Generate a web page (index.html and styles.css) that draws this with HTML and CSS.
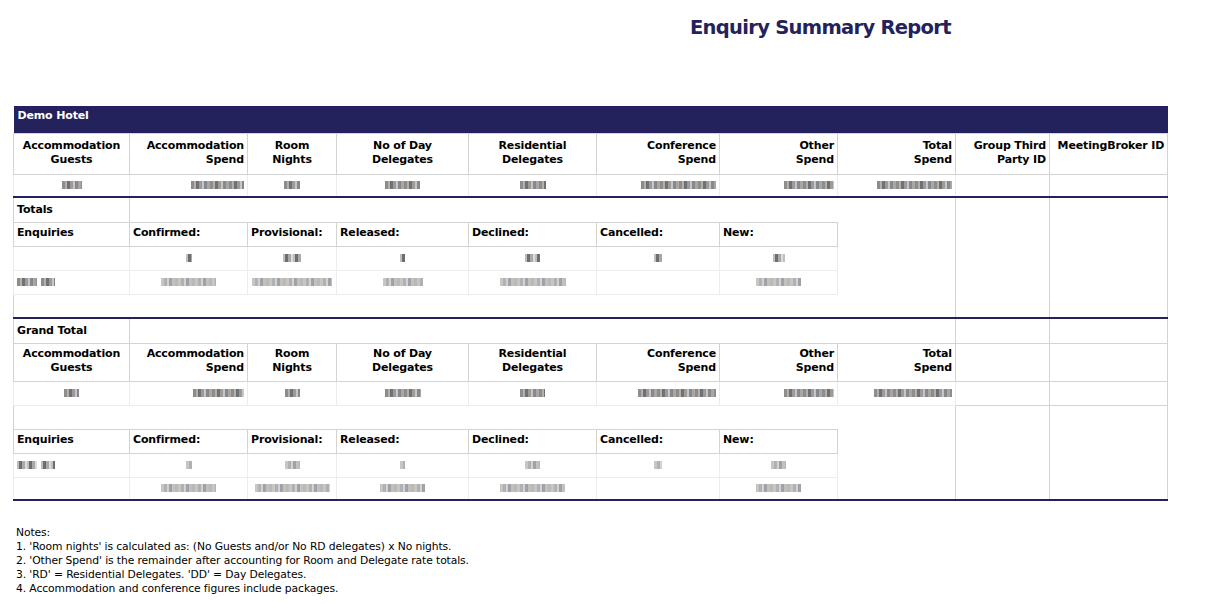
FILE: index.html
```html
<!DOCTYPE html>
<html lang="en">
<head>
<meta charset="utf-8">
<title>Enquiry Summary Report</title>
<link rel="stylesheet" href="styles.css">
</head>
<body>
<div class="page">
  <h1 class="title">Enquiry Summary Report</h1>
  <table class="report">
    <colgroup>
      <col class="c1"><col class="c2"><col class="c3"><col class="c4"><col class="c5">
      <col class="c6"><col class="c7"><col class="c8"><col class="c9"><col class="c10">
    </colgroup>
    <tbody>
      <tr class="band"><td colspan="10">Demo Hotel</td></tr>
      <tr class="hdr hdr-a">
        <th class="ctr">Accommodation<br>Guests</th>
        <th class="rgt">Accommodation<br>Spend</th>
        <th class="ctr">Room<br>Nights</th>
        <th class="ctr">No of Day<br>Delegates</th>
        <th class="ctr">Residential<br>Delegates</th>
        <th class="rgt">Conference<br>Spend</th>
        <th class="rgt">Other<br>Spend</th>
        <th class="rgt">Total<br>Spend</th>
        <th class="rgt">Group Third<br>Party ID</th>
        <th class="rgt">MeetingBroker ID</th>
      </tr>
      <tr class="data">
        <td class="ctr soft"><span class="v w20"></span></td>
        <td class="rgt soft"><span class="v w53"></span></td>
        <td class="ctr soft"><span class="v w16"></span></td>
        <td class="ctr soft"><span class="v w35"></span></td>
        <td class="ctr soft"><span class="v w26"></span></td>
        <td class="rgt soft"><span class="v w75"></span></td>
        <td class="rgt soft"><span class="v w50"></span></td>
        <td class="rgt soft"><span class="v w75"></span></td>
        <td class="box"></td>
        <td class="box"></td>
      </tr>
      <tr class="sect lbl">
        <td class="box"><b>Totals</b></td>
        <td colspan="7"></td>
        <td class="side" rowspan="5"></td>
        <td class="side" rowspan="5"></td>
      </tr>
      <tr class="lbl">
        <td class="box"><b>Enquiries</b></td>
        <td class="box"><b>Confirmed:</b></td>
        <td class="box"><b>Provisional:</b></td>
        <td class="box"><b>Released:</b></td>
        <td class="box"><b>Declined:</b></td>
        <td class="box"><b>Cancelled:</b></td>
        <td class="box"><b>New:</b></td>
        <td></td>
      </tr>
      <tr class="val">
        <td class="box soft"></td>
        <td class="box soft ctr"><span class="v dk w6"></span></td>
        <td class="box soft ctr"><span class="v dk w18"></span></td>
        <td class="box soft ctr"><span class="v dk w5"></span></td>
        <td class="box soft ctr"><span class="v dk w15"></span></td>
        <td class="box soft ctr"><span class="v dk w8"></span></td>
        <td class="box soft ctr"><span class="v dk w12"></span></td>
        <td></td>
      </tr>
      <tr class="val">
        <td class="box soft lft"><span class="v w20"></span> <span class="v w14"></span></td>
        <td class="box soft ctr"><span class="v lt w55"></span></td>
        <td class="box soft ctr"><span class="v lt w80"></span></td>
        <td class="box soft ctr"><span class="v lt w40"></span></td>
        <td class="box soft ctr"><span class="v lt w66"></span></td>
        <td class="box soft ctr"></td>
        <td class="box soft ctr"><span class="v lt w45"></span></td>
        <td></td>
      </tr>
      <tr class="gap">
        <td class="lside" colspan="8"></td>
      </tr>
      <tr class="sect lbl">
        <td class="box"><b>Grand Total</b></td>
        <td colspan="7"></td>
        <td class="box"></td>
        <td class="box"></td>
      </tr>
      <tr class="hdr hdr-b">
        <th class="ctr">Accommodation<br>Guests</th>
        <th class="rgt">Accommodation<br>Spend</th>
        <th class="ctr">Room<br>Nights</th>
        <th class="ctr">No of Day<br>Delegates</th>
        <th class="ctr">Residential<br>Delegates</th>
        <th class="rgt">Conference<br>Spend</th>
        <th class="rgt">Other<br>Spend</th>
        <th class="rgt">Total<br>Spend</th>
        <th></th>
        <th></th>
      </tr>
      <tr class="val">
        <td class="ctr soft"><span class="v w15"></span></td>
        <td class="rgt soft"><span class="v w51"></span></td>
        <td class="ctr soft"><span class="v w15"></span></td>
        <td class="ctr soft"><span class="v w36"></span></td>
        <td class="ctr soft"><span class="v w25"></span></td>
        <td class="rgt soft"><span class="v w78"></span></td>
        <td class="rgt soft"><span class="v w50"></span></td>
        <td class="rgt soft"><span class="v w78"></span></td>
        <td class="box"></td>
        <td class="box"></td>
      </tr>
      <tr class="gap">
        <td class="lside" colspan="8"></td>
        <td class="side" rowspan="4"></td>
        <td class="side" rowspan="4"></td>
      </tr>
      <tr class="lbl">
        <td class="box"><b>Enquiries</b></td>
        <td class="box"><b>Confirmed:</b></td>
        <td class="box"><b>Provisional:</b></td>
        <td class="box"><b>Released:</b></td>
        <td class="box"><b>Declined:</b></td>
        <td class="box"><b>Cancelled:</b></td>
        <td class="box"><b>New:</b></td>
        <td></td>
      </tr>
      <tr class="val">
        <td class="box soft lft"><span class="v dk w20"></span> <span class="v dk w14"></span></td>
        <td class="box soft ctr"><span class="v lt w6"></span></td>
        <td class="box soft ctr"><span class="v lt w15"></span></td>
        <td class="box soft ctr"><span class="v lt w5"></span></td>
        <td class="box soft ctr"><span class="v lt w15"></span></td>
        <td class="box soft ctr"><span class="v lt w8"></span></td>
        <td class="box soft ctr"><span class="v lt w15"></span></td>
        <td></td>
      </tr>
      <tr class="val last">
        <td class="box soft"></td>
        <td class="box soft ctr"><span class="v lt w55"></span></td>
        <td class="box soft ctr"><span class="v lt w75"></span></td>
        <td class="box soft ctr"><span class="v lt w45"></span></td>
        <td class="box soft ctr"><span class="v lt w65"></span></td>
        <td class="box soft ctr"></td>
        <td class="box soft ctr"><span class="v lt w45"></span></td>
        <td></td>
      </tr>
    </tbody>
  </table>
  <div class="notes">
    <div>Notes:</div>
    <div>1. 'Room nights' is calculated as: (No Guests and/or No RD delegates) x No nights.</div>
    <div>2. 'Other Spend' is the remainder after accounting for Room and Delegate rate totals.</div>
    <div>3. 'RD' = Residential Delegates. 'DD' = Day Delegates.</div>
    <div>4. Accommodation and conference figures include packages.</div>
  </div>
</div>
</body>
</html>
```

FILE: styles.css
```css
* { box-sizing: border-box; }

body {
  margin: 0;
  background: #ffffff;
  color: #000000;
  font-family: "DejaVu Sans", Verdana, sans-serif;
}

.page {
  padding-left: 13px;
}

.title {
  margin: 0 0 65px 0;
  padding: 15px 0 0 677px;
  font-size: 19.5px;
  line-height: 26px;
  font-weight: bold;
  color: #23225c;
  letter-spacing: -0.7px;
}

.report {
  border-collapse: collapse;
  table-layout: fixed;
  width: 1154px;
  font-size: 11px;
  line-height: 14px;
  border-bottom: 2px solid #23225c;
}

.c1 { width: 116px; }
.c2 { width: 118px; }
.c3 { width: 89px; }
.c4 { width: 132px; }
.c5 { width: 128px; }
.c6 { width: 123px; }
.c7 { width: 118px; }
.c8 { width: 118px; }
.c9 { width: 94px; }
.c10 { width: 118px; }

.report td,
.report th {
  padding: 0 3px;
  vertical-align: middle;
  text-align: left;
  font-weight: normal;
}

.report b,
.report th {
  font-weight: bold;
  letter-spacing: -0.15px;
}

.band td {
  height: 27px;
  background: #23225c;
  color: #ffffff;
  font-weight: bold;
  vertical-align: top;
  padding: 3px 4px 0;
  letter-spacing: -0.15px;
}

.hdr th {
  border: 1px solid #d3d3d3;
  vertical-align: top;
  padding-top: 5px;
}

.hdr-a th { height: 41px; }
.hdr-b th { height: 38px; padding-top: 3px; }

.data td { height: 23px; }
.val td { height: 24px; }
.last td { height: 23px; }
.gap td { height: 24px; }
.lbl td { height: 24px; vertical-align: top; padding-top: 3px; }
.report tr.sect > td { height: 25px; padding-top: 5px; border-top: 2px solid #23225c; }

.box { border: 1px solid #d3d3d3; }
.soft { border: 1px solid #ededed; }
.val .box.soft { border-top-color: #ececec; }
.last td.box { border-bottom-color: #d3d3d3; }
.side { border-left: 1px solid #d3d3d3; border-right: 1px solid #d3d3d3; }
.lside { border-left: 1px solid #d3d3d3; }

.ctr { text-align: center !important; }
.rgt { text-align: right !important; }
.lft { text-align: left !important; }

.v {
  display: inline-block;
  height: 8px;
  vertical-align: middle;
  background: repeating-linear-gradient(90deg,
    #8f8c8a 0 3px, #b3b0ad 3px 5px, #6f7176 5px 8px, #a19a94 8px 11px,
    #c3c6cb 11px 13px, #85888e 13px 16px, #aaa6a1 16px 19px);
}
.v.dk {
  background: repeating-linear-gradient(90deg,
    #c6bcb2 0 2px, #6e6e70 2px 5px, #a8a9ad 5px 8px, #d8dde3 8px 10px);
}
.v.lt {
  background: repeating-linear-gradient(90deg,
    #c9c5c1 0 3px, #aeb2b8 3px 6px, #d6d2cd 6px 8px, #9fa2a8 8px 11px,
    #c3c0bd 11px 14px, #b9b9ba 14px 17px);
}

.w5 { width: 5px; }
.w6 { width: 6px; }
.w8 { width: 8px; }
.w12 { width: 12px; }
.w14 { width: 14px; }
.w15 { width: 15px; }
.w16 { width: 16px; }
.w18 { width: 18px; }
.w20 { width: 20px; }
.w25 { width: 25px; }
.w26 { width: 26px; }
.w35 { width: 35px; }
.w36 { width: 36px; }
.w40 { width: 40px; }
.w45 { width: 45px; }
.w50 { width: 50px; }
.w51 { width: 51px; }
.w53 { width: 53px; }
.w55 { width: 55px; }
.w65 { width: 65px; }
.w66 { width: 66px; }
.w75 { width: 75px; }
.w78 { width: 78px; }
.w80 { width: 80px; }

.notes {
  margin-top: 25px;
  padding-left: 3px;
  font-size: 10.75px;
  line-height: 14px;
  letter-spacing: -0.1px;
}
```
